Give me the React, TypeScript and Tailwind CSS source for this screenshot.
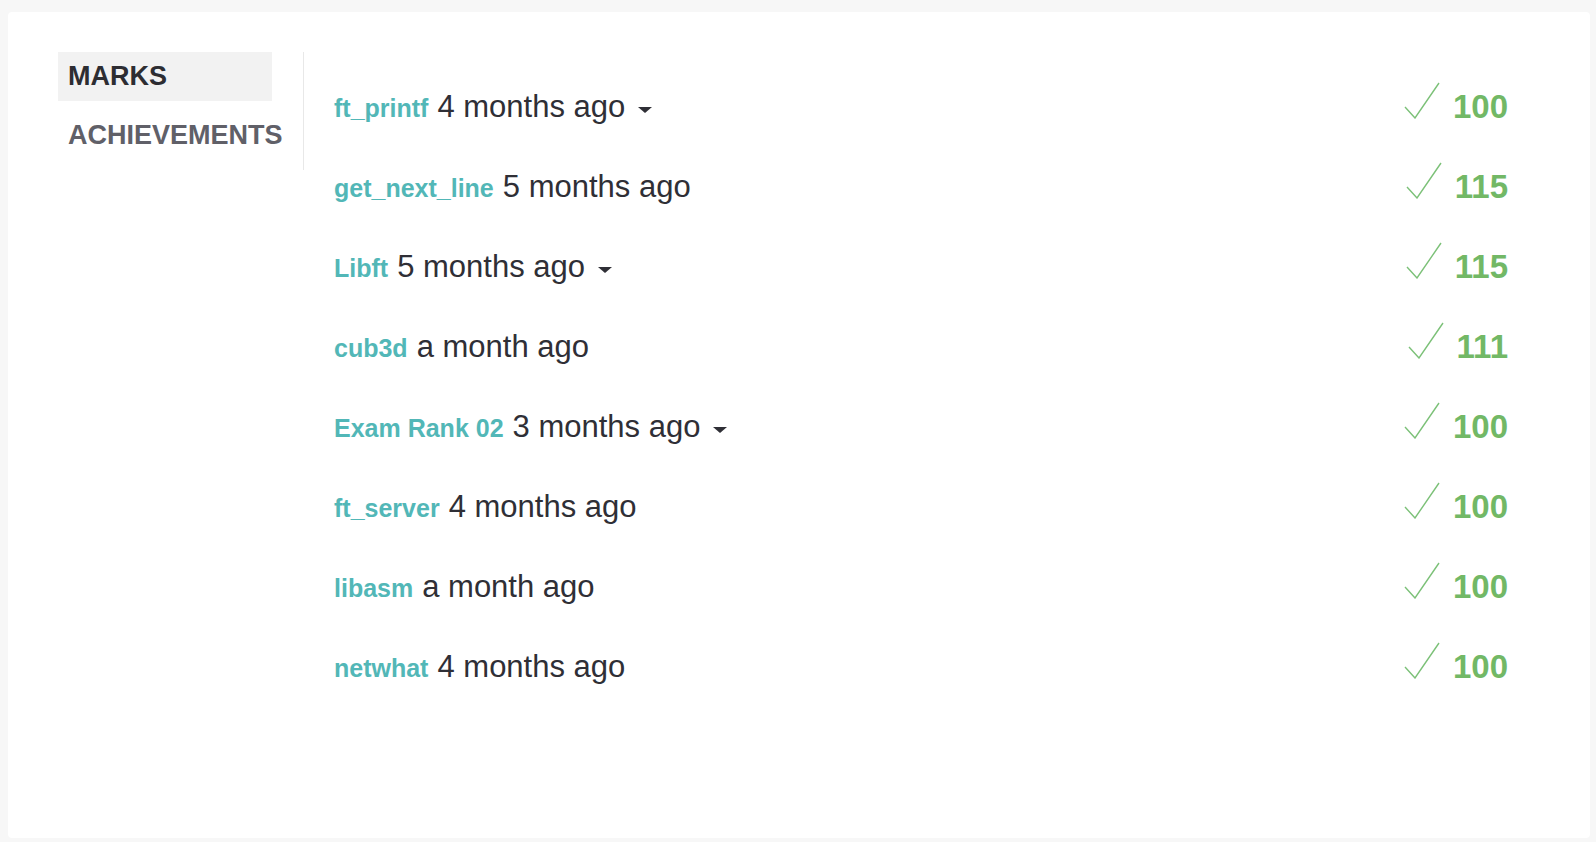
import { useState } from "react";

type Mark = {
  name: string;
  date: string;
  score: number;
  dropdown?: boolean;
};

const marks: Mark[] = [
  { name: "ft_printf", date: "4 months ago", score: 100, dropdown: true },
  { name: "get_next_line", date: "5 months ago", score: 115 },
  { name: "Libft", date: "5 months ago", score: 115, dropdown: true },
  { name: "cub3d", date: "a month ago", score: 111 },
  { name: "Exam Rank 02", date: "3 months ago", score: 100, dropdown: true },
  { name: "ft_server", date: "4 months ago", score: 100 },
  { name: "libasm", date: "a month ago", score: 100 },
  { name: "netwhat", date: "4 months ago", score: 100 },
];

// thin validated tick next to the score
function Tick() {
  return (
    <svg width="36" height="37" viewBox="0 0 36 37" className="mb-[12px]">
      <polyline
        points="1,25 11,36 35,1"
        fill="none"
        stroke="#7cc178"
        strokeWidth="1.4"
      />
    </svg>
  );
}

function Caret() {
  return (
    <svg width="14" height="6" viewBox="0 0 14 6" className="ml-[13px] self-center mt-[8px]">
      <polygon points="0,0 14,0 7,6" fill="#2f2f36" />
    </svg>
  );
}

function MarkRow({ mark }: { mark: Mark }) {
  return (
    <div className="h-[80px] flex items-center justify-between">
      <div className="flex items-baseline">
        <a href="#" className="text-[25px] font-bold text-[#52b7b7] leading-none">
          {mark.name}
        </a>
        <span className="ml-[9px] text-[31px] text-[#2f2f36] leading-none">{mark.date}</span>
        {mark.dropdown && <Caret />}
      </div>
      <div className="flex items-center">
        <Tick />
        <span className="ml-[13px] text-[33px] font-bold text-[#72b866] leading-none">
          {mark.score}
        </span>
      </div>
    </div>
  );
}

function App() {
  const [tab, setTab] = useState("marks");

  const tabs = [
    { id: "marks", label: "MARKS" },
    { id: "achievements", label: "ACHIEVEMENTS" },
  ];

  return (
    <div className="min-h-screen bg-[#f7f7f7] pt-[12px] pl-[8px] pr-[6px] pb-[4px] font-['Liberation_Sans',Arial,sans-serif]">
      <div className="h-[826px] bg-white rounded-[4px] flex items-start pt-[40px] pl-[50px] pr-[82px]">
        <div className="w-[246px] border-r border-[#e8e8e8]">
          {tabs.map((t) => (
            <div
              key={t.id}
              onClick={() => setTab(t.id)}
              className={
                "w-[214px] h-[49px] mb-[10px] pl-[10px] flex items-center whitespace-nowrap cursor-pointer text-[27px] font-bold " +
                (tab === t.id ? "bg-[#f2f2f2] text-[#2d2d32]" : "text-[#606068]")
              }
            >
              {t.label}
            </div>
          ))}
        </div>
        <div className="flex-1 pl-[30px] pt-[14px]">
          {marks.map((m) => (
            <MarkRow key={m.name} mark={m} />
          ))}
        </div>
      </div>
    </div>
  );
}

export default App;
